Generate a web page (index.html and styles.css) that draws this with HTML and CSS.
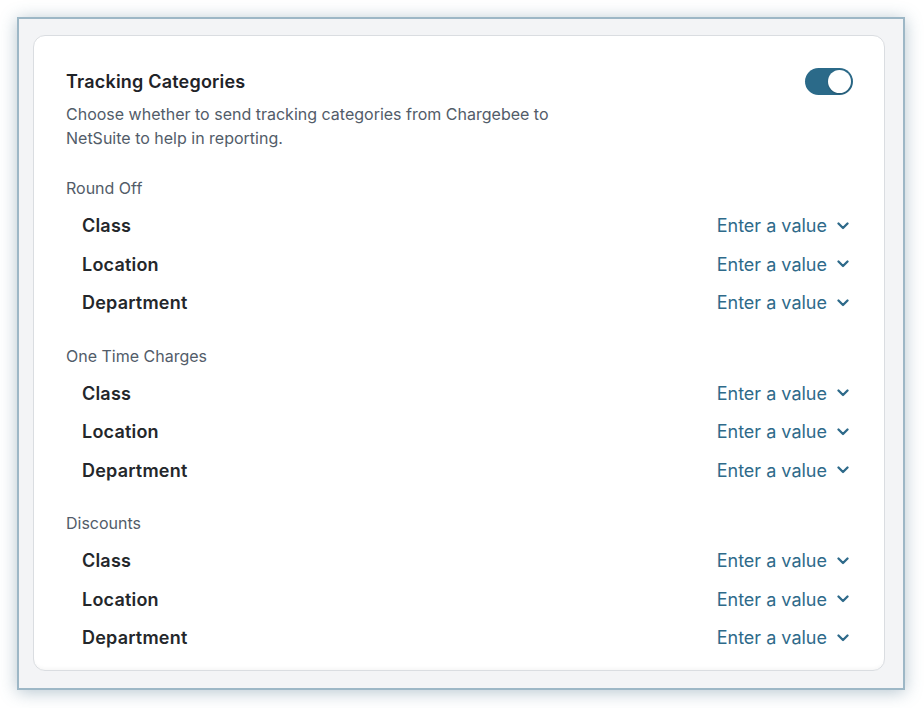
FILE: index.html
```html
<!DOCTYPE html>
<html lang="en">
<head>
<meta charset="utf-8">
<link rel="stylesheet" href="styles.css">
</head>
<body>
<div class="frame">
  <div class="card">
    <div class="head">
      <div class="head-text">
        <h2 class="title">Tracking Categories</h2>
        <p class="desc">Choose whether to send tracking categories from Chargebee to NetSuite to help in reporting.</p>
      </div>
      <div class="toggle"><span class="knob"></span></div>
    </div>

    <div class="section">
      <div class="section-label">Round Off</div>
      <div class="row"><span class="row-label">Class</span><span class="value">Enter a value<svg class="chev" viewBox="0 0 12 8"><path d="M1.5 1.5 6 6l4.5-4.5"/></svg></span></div>
      <div class="row"><span class="row-label">Location</span><span class="value">Enter a value<svg class="chev" viewBox="0 0 12 8"><path d="M1.5 1.5 6 6l4.5-4.5"/></svg></span></div>
      <div class="row"><span class="row-label">Department</span><span class="value">Enter a value<svg class="chev" viewBox="0 0 12 8"><path d="M1.5 1.5 6 6l4.5-4.5"/></svg></span></div>
    </div>

    <div class="section">
      <div class="section-label">One Time Charges</div>
      <div class="row"><span class="row-label">Class</span><span class="value">Enter a value<svg class="chev" viewBox="0 0 12 8"><path d="M1.5 1.5 6 6l4.5-4.5"/></svg></span></div>
      <div class="row"><span class="row-label">Location</span><span class="value">Enter a value<svg class="chev" viewBox="0 0 12 8"><path d="M1.5 1.5 6 6l4.5-4.5"/></svg></span></div>
      <div class="row"><span class="row-label">Department</span><span class="value">Enter a value<svg class="chev" viewBox="0 0 12 8"><path d="M1.5 1.5 6 6l4.5-4.5"/></svg></span></div>
    </div>

    <div class="section">
      <div class="section-label">Discounts</div>
      <div class="row"><span class="row-label">Class</span><span class="value">Enter a value<svg class="chev" viewBox="0 0 12 8"><path d="M1.5 1.5 6 6l4.5-4.5"/></svg></span></div>
      <div class="row"><span class="row-label">Location</span><span class="value">Enter a value<svg class="chev" viewBox="0 0 12 8"><path d="M1.5 1.5 6 6l4.5-4.5"/></svg></span></div>
      <div class="row"><span class="row-label">Department</span><span class="value">Enter a value<svg class="chev" viewBox="0 0 12 8"><path d="M1.5 1.5 6 6l4.5-4.5"/></svg></span></div>
    </div>
  </div>
</div>
</body>
</html>
```

FILE: styles.css
```css
* { box-sizing: border-box; }
html, body { margin: 0; background: #ffffff; }
body {
  padding: 17px 19px 18px 17px;
  font-family: Inter, "Noto Sans", sans-serif;
  -webkit-font-smoothing: antialiased;
}
.frame {
  width: 888px;
  height: 673px;
  border: 2px solid #9db7c6;
  background: #f3f4f6;
  padding: 16px 18px 0 14px;
  box-shadow: 0 2px 16px rgba(70, 110, 135, 0.4);
  overflow: hidden;
}
.card {
  height: 636px;
  background: #ffffff;
  border: 1px solid #dadde1;
  border-radius: 12px;
  padding: 34px 31px 0 32px;
  box-shadow: inset 0 -4px 4px -3px rgba(0,0,0,0.05);
}
.head {
  display: flex;
  justify-content: space-between;
  align-items: flex-start;
}
.title {
  margin: 0;
  font-size: 18px;
  line-height: 24px;
  font-weight: 600;
  letter-spacing: 0.2px;
  color: #1f2328;
}
.desc {
  margin: 8px 0 0;
  max-width: 500px;
  font-size: 16px;
  line-height: 24px;
  color: #525c69;
}
.toggle {
  width: 48px;
  height: 27px;
  margin-top: -2px;
  border-radius: 14px;
  background: #2b6a89;
  display: flex;
  align-items: center;
  justify-content: flex-end;
  padding: 2px;
}
.knob {
  width: 23px;
  height: 23px;
  border-radius: 50%;
  background: #ffffff;
  box-shadow: 0 1px 2px rgba(0,0,0,0.2);
}
.section { margin-top: 26px; }
.section + .section { margin-top: 21.5px; }
.section-label {
  font-size: 16px;
  line-height: 24px;
  color: #525c69;
}
.row {
  height: 38.6px;
  display: flex;
  align-items: center;
  justify-content: space-between;
  padding: 0 4px 0 16px;
  font-size: 18px;
}
.section-label + .row { margin-top: 6.3px; }
.row-label {
  font-weight: 600;
  letter-spacing: 0.2px;
  color: #24272b;
}
.value {
  display: flex;
  align-items: center;
  color: #2e6a8a;
}
.chev {
  width: 12px;
  height: 8px;
  margin-left: 10px;
  fill: none;
  stroke: #2e6a8a;
  stroke-width: 2.3;
  stroke-linecap: round;
  stroke-linejoin: round;
}
```
